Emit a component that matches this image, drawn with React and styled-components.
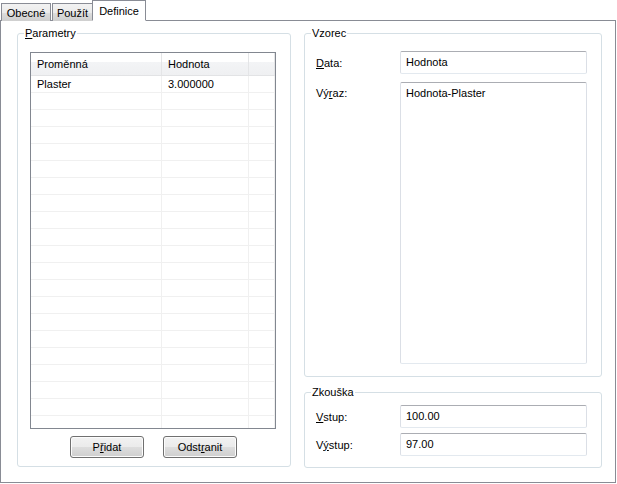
import styled, { createGlobalStyle } from 'styled-components'

const GlobalStyle = createGlobalStyle`
  body {
    margin: 0;
    background: #fff;
    font-family: 'Liberation Sans', Arial, sans-serif;
    font-size: 11px;
    color: #000;
  }
`

const Window = styled.div`
  width: 617px;
  height: 484px;
  background: #fff;
  display: flex;
  flex-direction: column;
`

const TabStrip = styled.div`
  display: flex;
  align-items: flex-end;
  height: 21px;
  padding-left: 1px;
  margin-bottom: -1px;
  position: relative;
  z-index: 1;
`

const Tab = styled.div`
  width: ${({ $w }) => $w};
  height: ${({ $active }) => ($active ? '21px' : '18px')};
  box-sizing: border-box;
  padding-top: ${({ $active }) => ($active ? '3px' : '2px')};
  margin-left: ${({ $ml }) => $ml || '0'};
  border: 1px solid #898c95;
  border-bottom: ${({ $active }) => ($active ? '1px solid #fff' : 'none')};
  background: ${({ $active }) =>
    $active ? '#fff' : 'linear-gradient(#f2f2f2, #ebebeb 50%, #dddddd 51%, #cfcfcf)'};
  font-size: 11px;
  line-height: 14px;
  text-align: center;
  white-space: nowrap;
`

const Panel = styled.div`
  width: 616px;
  height: 463px;
  box-sizing: border-box;
  border: 1px solid #898c95;
  display: grid;
  grid-template-columns: 274px 298px;
  column-gap: 13px;
  padding: 6px 0 0 16px;
`

const Group = styled.fieldset`
  margin: 0;
  box-sizing: border-box;
  border: 1px solid #d5dfe5;
  border-radius: 3px;
  padding: 0;
  height: ${({ $h }) => $h};
  min-width: 0;
`

const Legend = styled.legend`
  padding: 0 1px;
  margin-left: 6px;
  font-size: 11px;
  line-height: 13px;
`

const GroupBody = styled.div`
  display: flex;
  flex-direction: column;
  padding: ${({ $pad }) => $pad};
`

const Column = styled.div`
  display: flex;
  flex-direction: column;
  gap: 9px;
`

const Grid = styled.div`
  width: 246px;
  height: 377px;
  box-sizing: border-box;
  border: 1px solid #828790;
  overflow: hidden;
  background: #fff;
`

const Cols = '131px 87px 1fr'

const HeaderRow = styled.div`
  display: grid;
  grid-template-columns: ${Cols};
  height: 23px;
  box-sizing: border-box;
  border-bottom: 1px solid #e2e3e5;
  background: linear-gradient(#ffffff 0%, #ffffff 40%, #f3f4f6 41%, #eff0f2 100%);
`

const HeaderCell = styled.div`
  padding-left: 6px;
  line-height: 22px;
  border-right: 1px solid #e4e5e7;
`

const Row = styled.div`
  display: grid;
  grid-template-columns: ${Cols};
  height: 17px;
  box-sizing: border-box;
  border-bottom: 1px solid #f0f0f0;
`

const Cell = styled.div`
  padding-left: 6px;
  line-height: 17px;
  border-right: 1px solid #f0f0f0;
`

const ButtonBar = styled.div`
  display: flex;
  justify-content: center;
  gap: 19px;
  width: 246px;
  margin-top: 7px;
  padding-left: 1px;
  box-sizing: border-box;
`

const Button = styled.button`
  width: 74px;
  height: 22px;
  box-sizing: border-box;
  border: 1px solid #707070;
  border-radius: 3px;
  background: linear-gradient(#f2f2f2, #ebebeb 50%, #dddddd 51%, #cfcfcf);
  font-family: inherit;
  font-size: 11px;
  color: #000;
  padding: 0;
  box-shadow: inset 0 0 0 1px #fcfcfc;
`

const FieldRow = styled.div`
  display: flex;
  align-items: ${({ $top }) => ($top ? 'flex-start' : 'center')};
  margin-top: ${({ $mt }) => $mt || '0'};
`

const Label = styled.div`
  width: 84px;
  padding-top: ${({ $top }) => ($top ? '5px' : '0')};
  flex: none;
`

const TextBox = styled.div`
  width: 187px;
  height: ${({ $h }) => $h || '23px'};
  box-sizing: border-box;
  border: 1px solid #dbdfe6;
  border-top-color: #abadb3;
  border-bottom-color: #e3e9ef;
  border-radius: 2px;
  padding: ${({ $multi }) => ($multi ? '4px 5px' : '0 5px')};
  line-height: ${({ $multi }) => ($multi ? '13px' : '21px')};
`

const params = [{ name: 'Plaster', value: '3.000000' }]
const emptyRows = Array.from({ length: 21 })

export default function App() {
  return (
    <Window>
      <GlobalStyle />
      <TabStrip>
        <Tab $w="50px">Obecné</Tab>
        <Tab $w="41px" $ml="1px">
          Použít
        </Tab>
        <Tab $w="54px" $ml="-1px" $active>
          Definice
        </Tab>
      </TabStrip>
      <Panel>
        <Group $h="440px">
          <Legend>
            <u>P</u>arametry
          </Legend>
          <GroupBody $pad="12px 0 0 12px">
            <Grid>
              <HeaderRow>
                <HeaderCell>Proměnná</HeaderCell>
                <HeaderCell>Hodnota</HeaderCell>
                <HeaderCell />
              </HeaderRow>
              {params.map((p) => (
                <Row key={p.name}>
                  <Cell>{p.name}</Cell>
                  <Cell>{p.value}</Cell>
                  <Cell />
                </Row>
              ))}
              {emptyRows.map((_, i) => (
                <Row key={i}>
                  <Cell />
                  <Cell />
                  <Cell />
                </Row>
              ))}
            </Grid>
            <ButtonBar>
              <Button>
                P<u>ř</u>idat
              </Button>
              <Button>
                Odst<u>r</u>anit
              </Button>
            </ButtonBar>
          </GroupBody>
        </Group>
        <Column>
          <Group $h="350px">
            <Legend>Vzorec</Legend>
            <GroupBody $pad="11px 14px 0 11px">
              <FieldRow>
                <Label>
                  <u>D</u>ata:
                </Label>
                <TextBox>Hodnota</TextBox>
              </FieldRow>
              <FieldRow $top $mt="8px">
                <Label $top>
                  Vý<u>r</u>az:
                </Label>
                <TextBox $multi $h="282px">
                  Hodnota-Plaster
                </TextBox>
              </FieldRow>
            </GroupBody>
          </Group>
          <Group $h="82px">
            <Legend>Zkouška</Legend>
            <GroupBody $pad="6px 14px 0 11px">
              <FieldRow>
                <Label>
                  <u>V</u>stup:
                </Label>
                <TextBox>100.00</TextBox>
              </FieldRow>
              <FieldRow $mt="5px">
                <Label>
                  V<u>ý</u>stup:
                </Label>
                <TextBox>97.00</TextBox>
              </FieldRow>
            </GroupBody>
          </Group>
        </Column>
      </Panel>
    </Window>
  )
}
